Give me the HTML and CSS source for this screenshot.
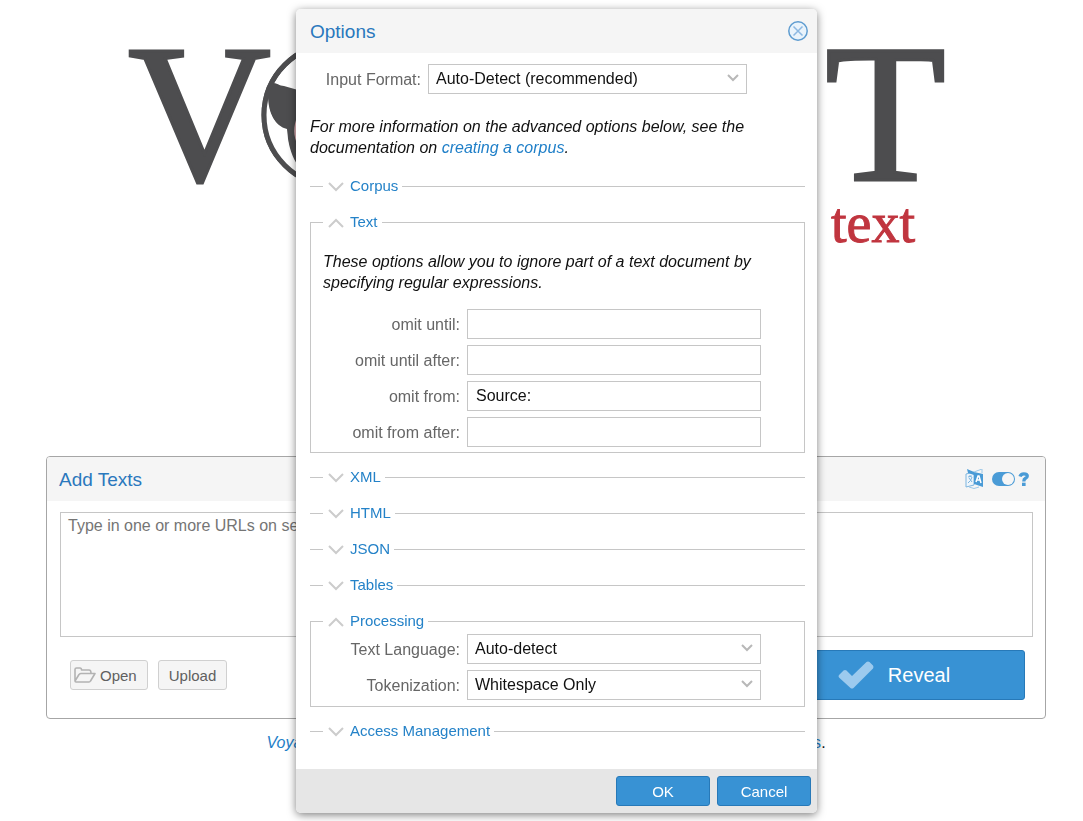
FILE: index.html
```html
<!DOCTYPE html>
<html lang="en">
<head>
<meta charset="utf-8">
<title>Voyant Tools</title>
<link rel="stylesheet" href="styles.css">
</head>
<body>
<main class="page">
  <svg class="logo" viewBox="0 0 1000 456" role="img" aria-label="Voyant">
    <text class="logo-letter" x="82" y="180">V</text>
    <circle cx="289" cy="115" r="71" fill="none" stroke="#4d4d4f" stroke-width="5"/>
    <path fill="#4d4d4f" d="M224 83 C230 82 233 86 238 86 L252 90 H270 V180 C250 172 242 150 241 129 C229 126 222 113 222 95 Z"/>
    <path fill="#fff" d="M221 96 C222 114 229 126 241 130 C242 150 246 162 254 174 C234 166 221 142 219 115 Z"/>
    <circle cx="289" cy="115" r="71" fill="none" stroke="#4d4d4f" stroke-width="5"/>
    <path fill="#e3b5b9" d="M252 115 C247 126 247 136 252 146 Z"/>
    <text class="logo-letter" x="779" y="180">T</text>
    <text class="logo-word" x="785" y="242">text</text>
  </svg>

  <section class="panel">
    <header class="bar">
      <h2 class="title">Add Texts</h2>
      <div class="tools">
        <button class="tool" type="button" aria-label="Language">
          <svg width="19" height="20" viewBox="0 0 19 20">
            <path d="M1 5 L9 3 V16 L1 18 Z" fill="#eef5fb" stroke="#7db5df"/>
            <path d="M2 0 L9 3 V6 L3 4 Z M9 3 L18 5 V18 L9 15 Z" fill="#4a9bd6"/>
            <path d="M9 3 L17 0 V4 M4 18 Q9 21 14 18" fill="none" stroke="#9cc8e8"/>
            <path d="M3 8 L7 7 M5 6 V8 M7 8 Q6 12 3 14 M4 9 L7 13" fill="none" stroke="#7db5df"/>
            <path d="M11 13 L13 7 H14 L16 14 M12 11 H15" fill="none" stroke="#fff" stroke-width="1.5"/>
          </svg>
        </button>
        <button class="tool" type="button" aria-label="Toggle">
          <svg width="23" height="14" viewBox="0 0 23 14"><rect width="23" height="14" rx="7" fill="#4a9bd6"/><circle cx="16" cy="7" r="6" fill="#f5f5f5"/></svg>
        </button>
        <button class="tool" type="button" aria-label="Help">
          <svg width="12" height="14" viewBox="0 0 12 14"><path d="M2 4.500 Q2.800 1.800 5.800 1.800 Q9.300 1.800 9.300 4 Q9.300 5.300 7.500 6.300 Q5.800 7.200 5.800 9.500" fill="none" stroke="#4a9bd6" stroke-width="3.300"/><rect x="4" y="10.700" width="3.600" height="3.300" fill="#4a9bd6"/></svg>
        </button>
      </div>
    </header>
    <textarea class="source" aria-label="Texts" placeholder="Type in one or more URLs on separate lines or paste in a full text."></textarea>
    <div class="actions">
      <button class="plain plain-icon" type="button">
        <svg width="22" height="16" viewBox="0 0 22 16"><path d="M1 14 V2.500 Q1 1 2.500 1 H6 Q7.500 1 7.500 3 H15 Q17 3 17 6 M1 14 L5 7.500 Q6 6.500 7 6.500 H21 L16.500 14 Q16 15 15 15 H2 Q1 15 1 14" fill="none" stroke="#b3b3b3" stroke-width="1.600" stroke-linejoin="round"/></svg>
        Open
      </button>
      <button class="plain" type="button">Upload</button>
      <button class="reveal" type="button">
        <svg width="36" height="28" viewBox="0 0 36 28"><path d="M1 14 L5.500 9.500 Q7 8.500 8.500 9.500 L14 15 L28.500 1 Q30 0 31.500 1 L35 4.500 Q36 6 35 7.500 L15.500 27 Q14 28 12.500 27 L1 16.500 Q0 15 1 14 Z" fill="#9ccaee"/></svg>
        Reveal
      </button>
    </div>
  </section>

  <p class="about"><a class="link" href="#"><i>Voyant Tools</i></a> is a web-based reading and analysis environment for <a class="link" href="#">digital texts</a>.</p>
</main>

<div class="overlay">
  <form class="dialog" role="dialog" aria-labelledby="dialog-title">
    <header class="bar">
      <h2 class="title" id="dialog-title">Options</h2>
      <button class="close" type="button" aria-label="Close">
        <svg width="20" height="20" viewBox="0 0 20 20"><circle cx="10" cy="10" r="9.200" fill="#e9f3fb" stroke="#5e9cd0" stroke-width="1.500"/><path d="M5.500 5.500 L14.500 14.500 M14.500 5.500 L5.500 14.500" stroke="#8cb8e2" stroke-width="1.500"/></svg>
      </button>
    </header>

    <div class="content">
      <div class="field field-format">
        <label for="format">Input Format:</label>
        <div class="combo">
          <select id="format"><option>Auto-Detect (recommended)</option></select>
          <svg class="caret" width="12" height="8" viewBox="0 0 12 8"><path d="M1 1 L6 6 L11 1"/></svg>
        </div>
      </div>

      <p class="note intro">For more information on the advanced options below, see the documentation on <a class="link" href="#">creating a corpus</a>.</p>

      <fieldset class="group">
        <legend><button class="toggle" type="button"><svg class="fold" width="18" height="12" viewBox="0 0 18 12"><path d="M2 3 L9 10 L16 3"/></svg>Corpus</button></legend>
      </fieldset>

      <fieldset class="group open group-text">
        <legend><button class="toggle" type="button"><svg class="fold" width="18" height="12" viewBox="0 0 18 12"><path d="M2 11 L9 4 L16 11"/></svg>Text</button></legend>
        <p class="note">These options allow you to ignore part of a text document by specifying regular expressions.</p>
        <div class="fields">
          <div class="field"><label for="until">omit until:</label><input id="until" type="text"></div>
          <div class="field"><label for="until-after">omit until after:</label><input id="until-after" type="text"></div>
          <div class="field"><label for="from">omit from:</label><input id="from" type="text" value="Source:"></div>
          <div class="field"><label for="from-after">omit from after:</label><input id="from-after" type="text"></div>
        </div>
      </fieldset>

      <fieldset class="group">
        <legend><button class="toggle" type="button"><svg class="fold" width="18" height="12" viewBox="0 0 18 12"><path d="M2 3 L9 10 L16 3"/></svg>XML</button></legend>
      </fieldset>
      <fieldset class="group">
        <legend><button class="toggle" type="button"><svg class="fold" width="18" height="12" viewBox="0 0 18 12"><path d="M2 3 L9 10 L16 3"/></svg>HTML</button></legend>
      </fieldset>
      <fieldset class="group">
        <legend><button class="toggle" type="button"><svg class="fold" width="18" height="12" viewBox="0 0 18 12"><path d="M2 3 L9 10 L16 3"/></svg>JSON</button></legend>
      </fieldset>
      <fieldset class="group">
        <legend><button class="toggle" type="button"><svg class="fold" width="18" height="12" viewBox="0 0 18 12"><path d="M2 3 L9 10 L16 3"/></svg>Tables</button></legend>
      </fieldset>

      <fieldset class="group open">
        <legend><button class="toggle" type="button"><svg class="fold" width="18" height="12" viewBox="0 0 18 12"><path d="M2 11 L9 4 L16 11"/></svg>Processing</button></legend>
        <div class="fields">
          <div class="field">
            <label for="language">Text Language:</label>
            <div class="combo">
              <select id="language"><option>Auto-detect</option></select>
              <svg class="caret" width="12" height="8" viewBox="0 0 12 8"><path d="M1 1 L6 6 L11 1"/></svg>
            </div>
          </div>
          <div class="field">
            <label for="tokenization">Tokenization:</label>
            <div class="combo">
              <select id="tokenization"><option>Whitespace Only</option></select>
              <svg class="caret" width="12" height="8" viewBox="0 0 12 8"><path d="M1 1 L6 6 L11 1"/></svg>
            </div>
          </div>
        </div>
      </fieldset>

      <fieldset class="group">
        <legend><button class="toggle" type="button"><svg class="fold" width="18" height="12" viewBox="0 0 18 12"><path d="M2 3 L9 10 L16 3"/></svg>Access Management</button></legend>
      </fieldset>
    </div>

    <footer class="buttons">
      <button class="primary" type="button">OK</button>
      <button class="primary" type="button">Cancel</button>
    </footer>
  </form>
</div>
</body>
</html>
```

FILE: styles.css
```css
* {
  box-sizing: border-box;
}

body {
  margin: 0;
  background: #fff;
  color: #111;
  font: 16px/21px "Liberation Sans", Arial, sans-serif;
}

h2,
p {
  margin: 0;
}

button,
input,
select,
textarea {
  font: inherit;
}

svg {
  display: block;
  flex: none;
}

.link {
  color: #1f7fc8;
  text-decoration: none;
}

.page {
  padding: 0 37px 0 46px;
}

.logo {
  width: 100%;
  height: auto;
}

.logo-letter {
  fill: #4d4d4f;
  stroke: #4d4d4f;
  stroke-width: 3px;
  font: 198px "Liberation Serif", serif;
}

.logo-word {
  fill: #c0353f;
  stroke: #c0353f;
  stroke-width: 1px;
  font: 56px "Liberation Serif", serif;
}

.bar {
  display: flex;
  align-items: center;
  justify-content: space-between;
  height: 44px;
  background: #f5f5f5;
}

.title {
  color: #2a78bd;
  font-size: 19px;
  font-weight: 400;
}

.panel {
  border: 1px solid #a6a6a6;
  border-radius: 4px;
  overflow: hidden;
}

.panel .bar {
  padding: 0 15px 0 12px;
}

.tools {
  display: flex;
  align-items: center;
  gap: 3px;
}

.tool,
.close,
.toggle {
  padding: 0;
  border: 0;
  background: none;
}

.tool:first-child {
  margin-right: 5px;
}

.source {
  display: block;
  width: calc(100% - 25px);
  height: 125px;
  margin: 11px 12px 13px 13px;
  padding: 2px 7px;
  border: 1px solid #c6c6c6;
  resize: none;
}

.source::placeholder {
  color: #757575;
}

.actions {
  display: flex;
  align-items: center;
  gap: 10px;
  padding: 0 20px 18px 23px;
}

.plain {
  display: flex;
  align-items: center;
  gap: 4px;
  height: 30px;
  padding: 0 10px;
  border: 1px solid #d0d0d0;
  border-radius: 3px;
  background: #f5f5f5;
  color: #606060;
  font-size: 15px;
}

.plain-icon {
  padding-left: 3px;
}

.reveal {
  display: flex;
  align-items: center;
  justify-content: center;
  gap: 14px;
  width: 262px;
  height: 50px;
  margin-left: auto;
  border: 1px solid #2779b8;
  border-radius: 3px;
  background: #3892d4;
  color: #fff;
  font-size: 20px;
}

.about {
  padding-top: 13px;
  text-align: center;
}

.overlay {
  position: fixed;
  inset: 0;
  display: flex;
  align-items: center;
  justify-content: center;
  padding: 1px 0 0 30px;
}

.dialog {
  width: 521px;
  border-radius: 5px;
  overflow: hidden;
  background: #fff;
  box-shadow: 0 2px 8px rgba(0, 0, 0, 0.5);
}

.dialog .bar {
  padding: 0 9px 0 14px;
}

.content {
  padding: 11px 12px 29px 14px;
}

.field {
  display: grid;
  grid-template-columns: 137px 1fr;
  align-items: center;
  gap: 7px;
  color: #666;
}

.field label {
  text-align: right;
}

.field-format {
  grid-template-columns: 111px 1fr;
  padding-right: 58px;
}

.field input,
.field select {
  display: block;
  width: 100%;
  height: 30px;
  padding: 0 8px;
  border: 1px solid #c6c6c6;
  border-radius: 0;
  background: #fff;
  color: #111;
}

.field select {
  appearance: none;
  padding: 0 7px 2px;
}

.combo {
  position: relative;
}

.caret {
  position: absolute;
  top: 10px;
  right: 8px;
  fill: none;
  stroke: #b8b8b8;
  stroke-width: 2;
  pointer-events: none;
}

.note {
  font-style: italic;
}

.intro {
  padding: 22px 0 19px;
}

.group {
  min-width: 0;
  margin: 0 0 18px;
  padding: 0;
  border: 0 solid #c6c6c6;
  border-top-width: 1px;
}

.group:last-child {
  margin-bottom: 0;
}

.group legend {
  margin-left: 13px;
  padding: 0 4px;
}

.group.open {
  margin-bottom: 15px;
  padding: 4px 43px 6px 12px;
  border-width: 1px;
}

.group.open legend {
  margin-left: 0;
}

.group.group-text {
  padding-top: 20px;
  padding-bottom: 5px;
}

.group-text .note {
  margin-right: -24px;
  padding-bottom: 16px;
}

.toggle {
  display: flex;
  align-items: center;
  gap: 5px;
  height: 18px;
  color: #2482c8;
  font-size: 15px;
  line-height: 18px;
}

.fold {
  fill: none;
  stroke: #cccccc;
  stroke-width: 2;
}

.fields {
  display: grid;
  gap: 6px;
}

.buttons {
  display: flex;
  justify-content: flex-end;
  gap: 7px;
  padding: 7px 6px;
  background: #e6e6e6;
}

.primary {
  width: 94px;
  height: 30px;
  border: 1px solid #2779b8;
  border-radius: 3px;
  background: #3892d4;
  color: #fff;
  font-size: 15px;
}
```
